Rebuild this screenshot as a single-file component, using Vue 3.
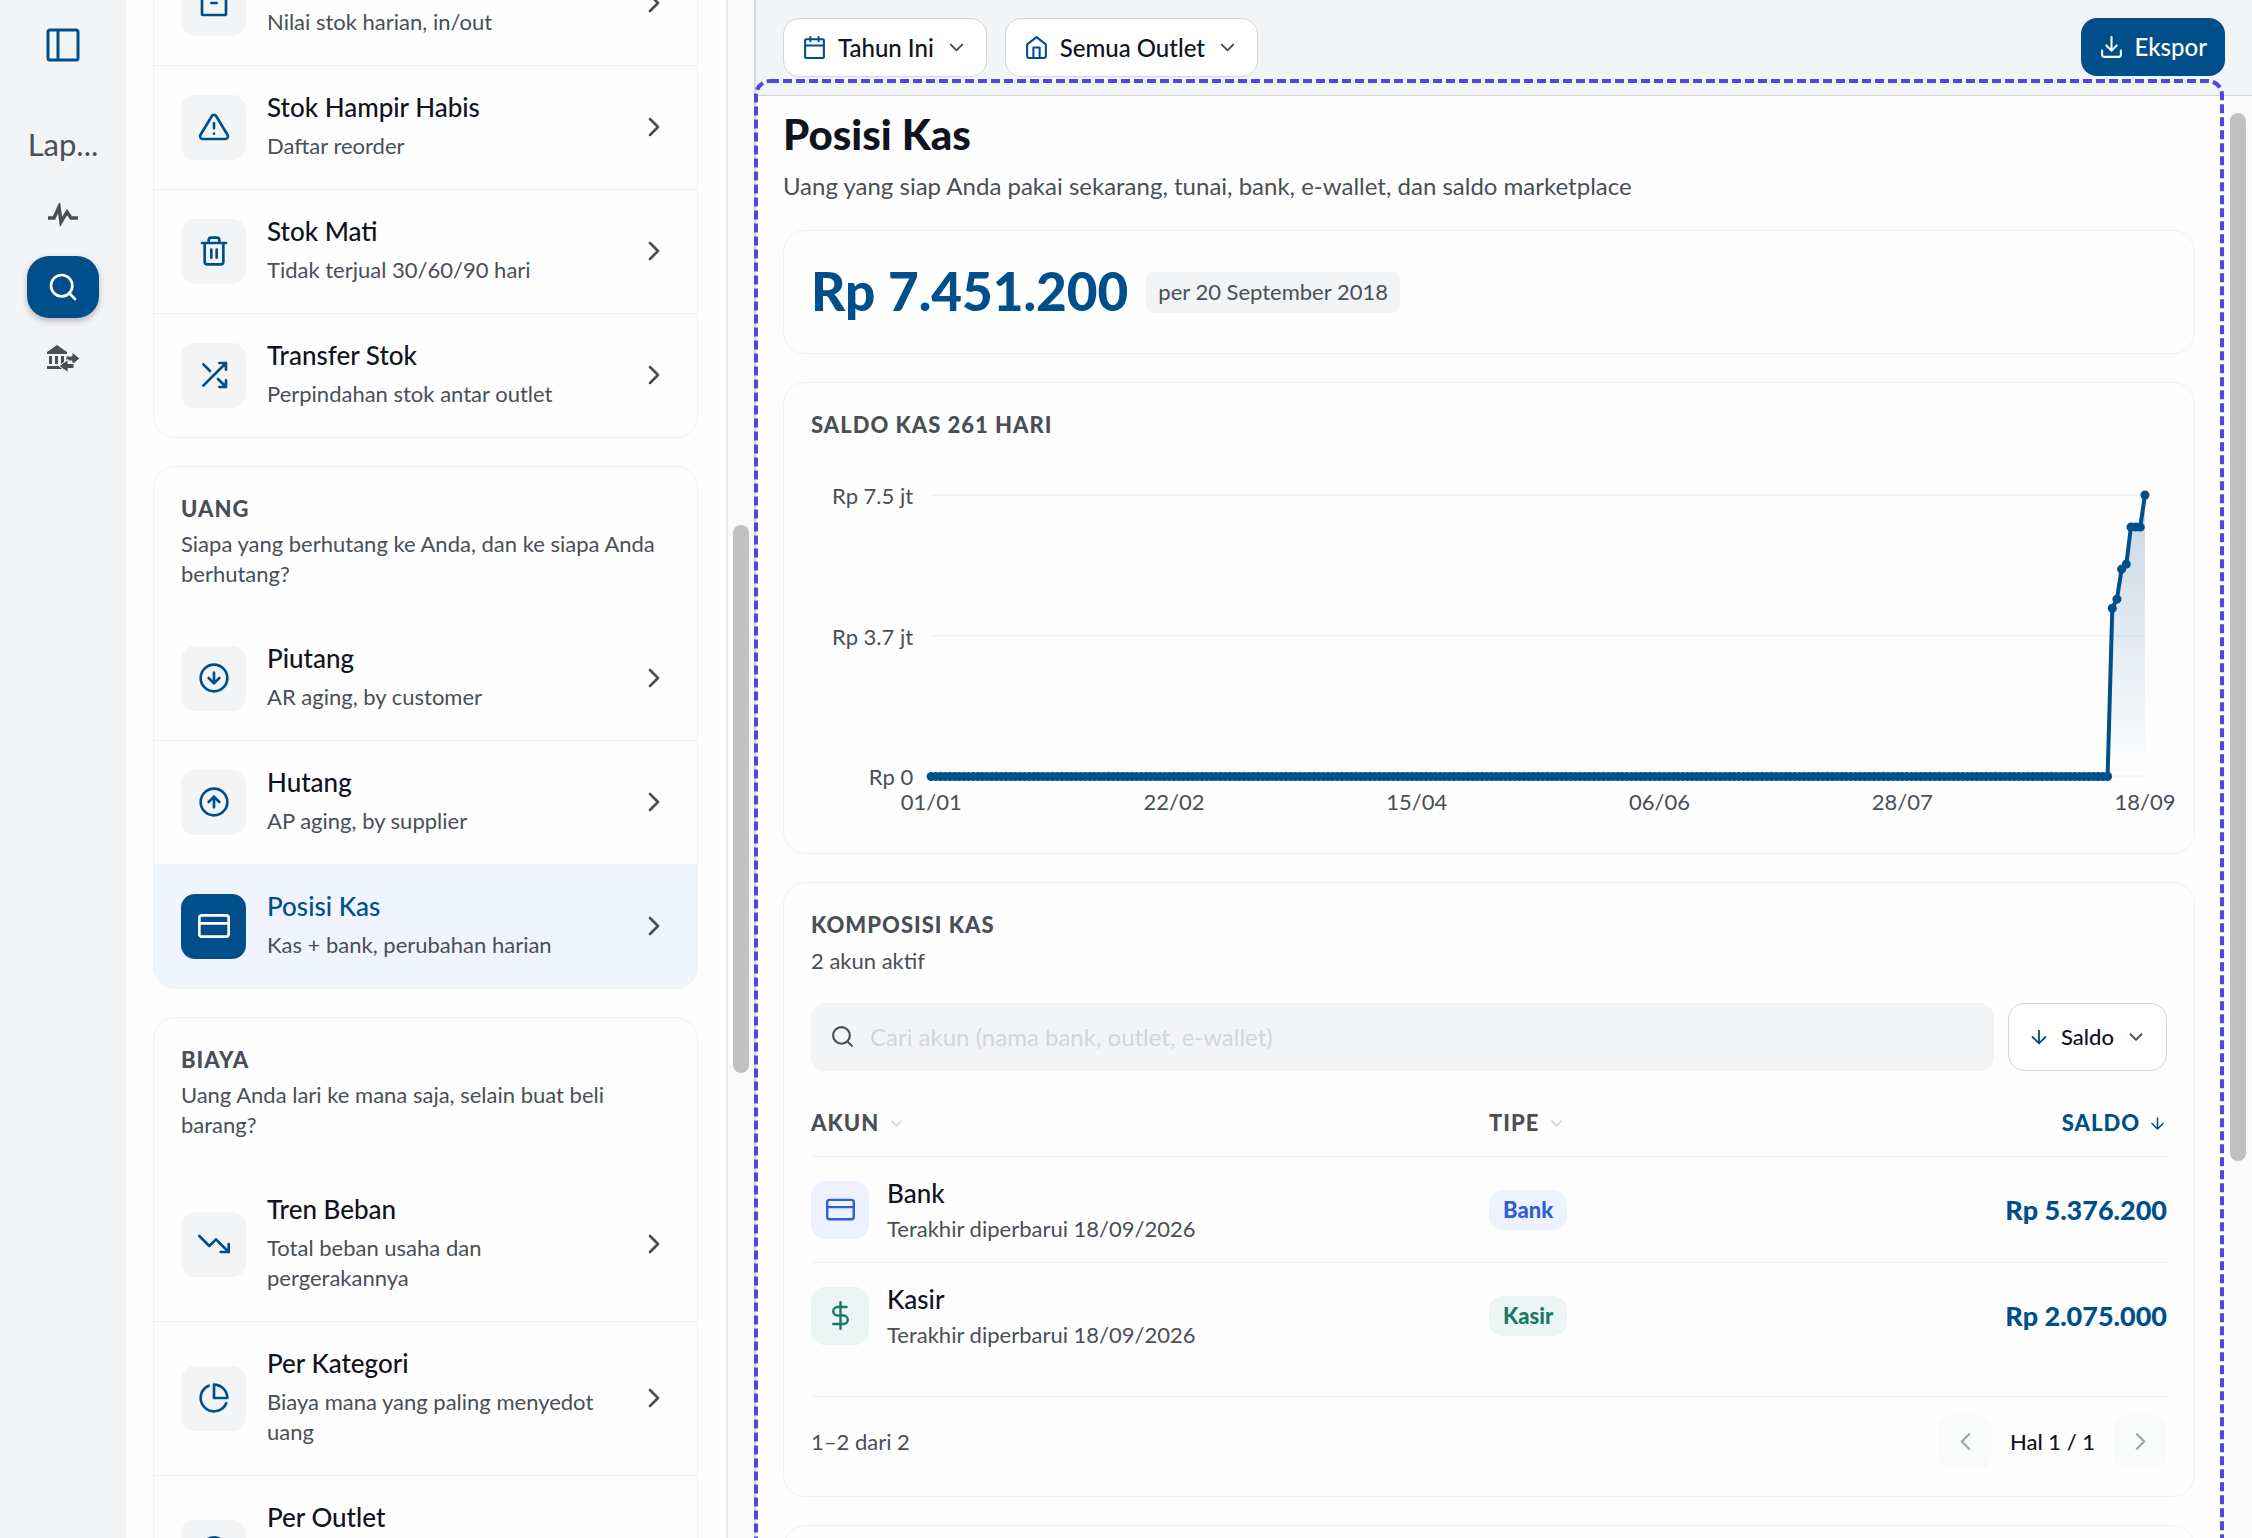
<script setup>
import { ref } from 'vue'

const search = ref('')

// feather-style outlines on a 24 x 24 grid
const icons = {
  box: '<rect x="3" y="3" width="18" height="18" rx="1"/><path d="M10 12h4"/>',
  alert: '<path d="M10.3 3.9 1.8 18a2 2 0 0 0 1.7 3h17a2 2 0 0 0 1.7-3L13.7 3.9a2 2 0 0 0-3.4 0z"/><path d="M12 9v4M12 17h.01"/>',
  trash: '<path d="M3 6h18M19 6v14a2 2 0 0 1-2 2H7a2 2 0 0 1-2-2V6M8 6V4a2 2 0 0 1 2-2h4a2 2 0 0 1 2 2v2M10 11v6M14 11v6"/>',
  shuffle: '<path d="M16 3h5v5M4 20 21 3M21 16v5h-5M15 15l6 6M4 4l5 5"/>',
  down: '<circle cx="12" cy="12" r="10"/><path d="m8 12 4 4 4-4M12 8v8"/>',
  up: '<circle cx="12" cy="12" r="10"/><path d="m16 12-4-4-4 4M12 16V8"/>',
  card: '<rect x="1" y="4" width="22" height="16" rx="2"/><path d="M1 10h22"/>',
  trend: '<path d="m23 18-9.5-9.5-5 5L1 6"/><path d="M17 18h6v-6"/>',
  pie: '<path d="M21.2 15.9A10 10 0 1 1 8 2.8"/><path d="M22 12A10 10 0 0 0 12 2v10z"/>',
  pin: '<path d="M21 10c0 7-9 13-9 13s-9-6-9-13a9 9 0 0 1 18 0z"/><circle cx="12" cy="10" r="3"/>',
  calendar: '<rect x="3" y="4" width="18" height="18" rx="1"/><path d="M16 2v4M8 2v4M3 10h18"/>',
  home: '<path d="m3 9 9-7 9 7v11a2 2 0 0 1-2 2H5a2 2 0 0 1-2-2z"/><path d="M9 22V12h6v10"/>',
  download: '<path d="M21 15v4a2 2 0 0 1-2 2H5a2 2 0 0 1-2-2v-4M7 10l5 5 5-5M12 15V2"/>',
  search: '<circle cx="11" cy="11" r="8"/><path d="m21 21-4.3-4.3"/>',
  arrow: '<path d="M12 5v14M19 12l-7 7-7-7"/>',
  chevronDown: '<path d="m6 9 6 6 6-6"/>',
  chevronRight: '<path d="m9 18 6-6-6-6"/>',
  chevronLeft: '<path d="m15 18-6-6 6-6"/>',
  dollar: '<path d="M12 1v22M17 5H9.5a3.5 3.5 0 0 0 0 7h5a3.5 3.5 0 0 1 0 7H6"/>'
}

const groups = [
  {
    id: 'stok',
    items: [
      { name: 'Nilai Stok', desc: 'Nilai stok harian, in/out', icon: 'box' },
      { name: 'Stok Hampir Habis', desc: 'Daftar reorder', icon: 'alert' },
      { name: 'Stok Mati', desc: 'Tidak terjual 30/60/90 hari', icon: 'trash' },
      { name: 'Transfer Stok', desc: 'Perpindahan stok antar outlet', icon: 'shuffle' }
    ]
  },
  {
    id: 'uang',
    title: 'UANG',
    desc: 'Siapa yang berhutang ke Anda, dan ke siapa Anda berhutang?',
    items: [
      { name: 'Piutang', desc: 'AR aging, by customer', icon: 'down' },
      { name: 'Hutang', desc: 'AP aging, by supplier', icon: 'up' },
      { name: 'Posisi Kas', desc: 'Kas + bank, perubahan harian', icon: 'card', active: true }
    ]
  },
  {
    id: 'biaya',
    title: 'BIAYA',
    desc: 'Uang Anda lari ke mana saja, selain buat beli barang?',
    items: [
      { name: 'Tren Beban', desc: 'Total beban usaha dan pergerakannya', icon: 'trend' },
      { name: 'Per Kategori', desc: 'Biaya mana yang paling menyedot uang', icon: 'pie' },
      { name: 'Per Outlet', desc: 'Outlet mana yang paling banyak keluar biaya', icon: 'pin' }
    ]
  }
]

const accounts = [
  { name: 'Bank', updated: '18/09/2026', type: 'Bank', kind: 'blue', icon: 'card', balance: 'Rp 5.376.200' },
  { name: 'Kasir', updated: '18/09/2026', type: 'Kasir', kind: 'green', icon: 'dollar', balance: 'Rp 2.075.000' }
]

// chart geometry
const left = 120
const right = 1332
const top = 26
const bottom = 307
const max = 7451200
const balances = [
  ...Array(253).fill(0),
  4455000, 4694000, 5489000, 5622000, 6603000, 6603000, 6603000, 7451200
]
const points = balances.map((v, i) => ({
  x: left + (i * (right - left)) / (balances.length - 1),
  y: bottom - (v / max) * (bottom - top)
}))
const line = points.map((p) => `${p.x.toFixed(1)},${p.y.toFixed(1)}`).join(' ')
const area = `${left},${bottom} ${line} ${right},${bottom}`
const yTicks = [
  { label: 'Rp 7.5 jt', y: top },
  { label: 'Rp 3.7 jt', y: (top + bottom) / 2 },
  { label: 'Rp 0', y: bottom }
]
const xTicks = ['01/01', '22/02', '15/04', '06/06', '28/07', '18/09'].map((label, i) => ({
  label,
  x: left + (i * (right - left)) / 5
}))
</script>

<template>
  <div class="app">
    <nav class="rail" aria-label="Menu utama">
      <button class="rail-toggle" aria-label="Buka menu">
        <svg viewBox="0 0 34 34"><rect x="2" y="2" width="30" height="30" rx="2" /><path d="M12 2v30" /></svg>
      </button>
      <span class="rail-title">Lap...</span>
      <a href="#" class="rail-link" aria-label="Aktivitas">
        <svg viewBox="0 0 32 24" class="pulse"><path d="M1 15h6L12 4l2 15 6-10 4 6h7" /></svg>
      </a>
      <a href="#" class="rail-link on" aria-label="Cari">
        <svg class="icon" viewBox="0 0 24 24" v-html="icons.search"></svg>
      </a>
      <a href="#" class="rail-link" aria-label="Mutasi bank">
        <svg viewBox="0 0 34 28" class="bank">
          <path d="M1 7 11 0l10 7v2H1zM3 11h3v8H3zM9 11h3v8H9zM15 11h3v8h-3zM1 21h15v3H1z" />
          <path class="cut" d="M20 11h6V7l8 6.500-8 6.500v-4h-6z" />
          <path class="cut" d="M28 18.500v5h-6v4L13 21l9-6.500v4z" />
        </svg>
      </a>
    </nav>

    <aside class="list">
      <div class="list-inner">
        <section v-for="g in groups" :key="g.id" class="card group">
          <header v-if="g.title" class="group-head">
            <h2 class="caps">{{ g.title }}</h2>
            <p>{{ g.desc }}</p>
          </header>
          <a v-for="item in g.items" :key="item.name" href="#" class="item" :class="{ active: item.active }">
            <span class="tile"><svg class="icon" viewBox="0 0 24 24" v-html="icons[item.icon]"></svg></span>
            <span class="item-text">
              <span class="item-name">{{ item.name }}</span>
              <span class="item-desc">{{ item.desc }}</span>
            </span>
            <svg class="icon go" viewBox="0 0 24 24" v-html="icons.chevronRight"></svg>
          </a>
        </section>
      </div>
    </aside>
    <div class="scroll list-scroll"><span class="thumb"></span></div>

    <main class="main">
      <div class="toolbar">
        <button class="filter">
          <svg class="icon" viewBox="0 0 24 24" v-html="icons.calendar"></svg>
          Tahun Ini
          <svg class="icon caret" viewBox="0 0 24 24" v-html="icons.chevronDown"></svg>
        </button>
        <button class="filter">
          <svg class="icon" viewBox="0 0 24 24" v-html="icons.home"></svg>
          Semua Outlet
          <svg class="icon caret" viewBox="0 0 24 24" v-html="icons.chevronDown"></svg>
        </button>
        <button class="export">
          <svg class="icon" viewBox="0 0 24 24" v-html="icons.download"></svg>
          Ekspor
        </button>
      </div>

      <div class="body">
        <div class="content">
          <h1>Posisi Kas</h1>
          <p class="lead">Uang yang siap Anda pakai sekarang, tunai, bank, e-wallet, dan saldo marketplace</p>

          <section class="card total">
            <strong>Rp 7.451.200</strong>
            <span class="date">per 20 September 2018</span>
          </section>

          <section class="card panel">
            <h2 class="caps">SALDO KAS 261 HARI</h2>
            <svg class="chart" viewBox="0 0 1354 356" role="img" aria-label="Grafik saldo kas">
              <defs>
                <linearGradient id="fade" x1="0" y1="0" x2="0" y2="1">
                  <stop offset="0" stop-color="#004f8b" stop-opacity="0.22" />
                  <stop offset="1" stop-color="#004f8b" stop-opacity="0" />
                </linearGradient>
              </defs>
              <g v-for="t in yTicks" :key="t.label">
                <line :x1="left" :x2="right" :y1="t.y" :y2="t.y" class="grid" />
                <text :x="102" :y="t.y + 9" text-anchor="end">{{ t.label }}</text>
              </g>
              <polygon :points="area" fill="url(#fade)" />
              <polyline :points="line" class="line" />
              <circle v-for="(p, i) in points" :key="i" :cx="p.x" :cy="p.y" r="4.5" class="dot" />
              <text v-for="t in xTicks" :key="t.label" :x="t.x" y="341" text-anchor="middle">{{ t.label }}</text>
            </svg>
          </section>

          <section class="card panel">
            <h2 class="caps">KOMPOSISI KAS</h2>
            <p class="note">2 akun aktif</p>

            <div class="tools">
              <label class="search">
                <svg class="icon" viewBox="0 0 24 24" v-html="icons.search"></svg>
                <input v-model="search" type="text" aria-label="Cari akun" placeholder="Cari akun (nama bank, outlet, e-wallet)" />
              </label>
              <button class="sort">
                <svg class="icon" viewBox="0 0 24 24" v-html="icons.arrow"></svg>
                Saldo
                <svg class="icon caret" viewBox="0 0 24 24" v-html="icons.chevronDown"></svg>
              </button>
            </div>

            <table>
              <thead>
                <tr>
                  <th class="col-name"><span>AKUN <svg class="icon" viewBox="0 0 24 24" v-html="icons.chevronDown"></svg></span></th>
                  <th><span>TIPE <svg class="icon" viewBox="0 0 24 24" v-html="icons.chevronDown"></svg></span></th>
                  <th class="num"><span>SALDO <svg class="icon" viewBox="0 0 24 24" v-html="icons.arrow"></svg></span></th>
                </tr>
              </thead>
              <tbody>
                <tr v-for="a in accounts" :key="a.name">
                  <td>
                    <div class="account">
                      <span class="mini" :class="a.kind"><svg class="icon" viewBox="0 0 24 24" v-html="icons[a.icon]"></svg></span>
                      <div class="account-text">
                        <span class="item-name">{{ a.name }}</span>
                        <span class="item-desc">Terakhir diperbarui {{ a.updated }}</span>
                      </div>
                    </div>
                  </td>
                  <td><span class="badge" :class="a.kind">{{ a.type }}</span></td>
                  <td class="num">{{ a.balance }}</td>
                </tr>
              </tbody>
            </table>

            <footer class="pager">
              <span class="note">1–2 dari 2</span>
              <button disabled aria-label="Sebelumnya"><svg class="icon" viewBox="0 0 24 24" v-html="icons.chevronLeft"></svg></button>
              <span class="page">Hal 1 / 1</span>
              <button disabled aria-label="Berikutnya"><svg class="icon" viewBox="0 0 24 24" v-html="icons.chevronRight"></svg></button>
            </footer>
          </section>

          <section class="card next"></section>
        </div>
        <div class="scroll main-scroll"><span class="thumb"></span></div>
      </div>

      <svg class="focus" aria-hidden="true"><rect x="2" y="2" rx="14" /></svg>
    </main>
  </div>
</template>

<style>
body { margin: 0; overflow: hidden; }
</style>

<style scoped>
* { box-sizing: border-box; }
.app {
  display: flex;
  height: 100vh;
  overflow: hidden;
  background: #fefefe;
  color: #11131f;
  font-family: Lato, "Open Sans", sans-serif;
  font-size: 22px;
  line-height: 30px;
}
h1, h2, p { margin: 0; }
a { color: inherit; text-decoration: none; }
button { font: inherit; color: inherit; border: 0; padding: 0; }
.icon { width: 32px; height: 32px; flex: none; fill: none; stroke: currentColor; stroke-width: 2; stroke-linecap: round; stroke-linejoin: round; }

/* left rail */
.rail { width: 126px; flex: none; background: #f3f4f6; display: flex; flex-direction: column; align-items: center; color: #4a4f56; }
.rail-toggle { margin-top: 28px; width: 34px; height: 34px; background: none; color: #004f8b; }
.rail-toggle svg { display: block; fill: none; stroke: currentColor; stroke-width: 3; }
.rail-title { margin-top: 62px; margin-bottom: 20px; font-size: 31px; line-height: 40px; }
.rail-link { width: 72px; height: 62px; margin-bottom: 10px; display: flex; align-items: center; justify-content: center; border-radius: 22px; }
.rail-link.on { background: #004f8b; color: #fff; box-shadow: 0 3px 6px rgba(0, 0, 0, 0.25); }
.pulse { width: 32px; height: 24px; fill: none; stroke: currentColor; stroke-width: 3.5; }
.bank { width: 34px; height: 28px; fill: currentColor; overflow: visible; }
.cut { stroke: #f3f4f6; stroke-width: 1; }

/* report list */
.list { width: 600px; flex: none; overflow: hidden; display: flex; flex-direction: column; }
.list-inner { padding: 0 28px 0 27px; margin-top: -60px; display: flex; flex-direction: column; gap: 28px; }
.card { border: 1px solid #f1f2f4; border-radius: 22px; background: #fefefe; }
.group { overflow: hidden; flex: none; }
.group-head { padding: 27px 27px 27px; color: #4a4f56; }
.caps { font-size: 22px; line-height: 30px; font-weight: 900; letter-spacing: 1px; color: #4a4f56; }
.group-head p { margin-top: 5px; }
.item { display: flex; align-items: center; gap: 21px; padding: 24px 27px 25px; border-top: 1px solid #f1f2f4; }
.item:first-child, .group-head + .item { border-top-color: transparent; }
.tile { width: 65px; height: 65px; flex: none; border-radius: 14px; background: #f3f4f6; color: #004f8b; display: flex; align-items: center; justify-content: center; }
.item-text { flex: 1; display: flex; flex-direction: column; gap: 6px; padding-bottom: 3px; }
.item-name { font-size: 26px; line-height: 35px; font-weight: 500; }
.item-desc { color: #4a4f56; }
.go { color: #4a4f56; }
.active { background: #eff4ff; }
.active .item-name { color: #004f8b; }
.active .tile { background: #004f8b; color: #fff; }

/* drawn scrollbars */
.scroll { width: 28px; flex: none; background: #fafafa; display: flex; flex-direction: column; align-items: center; }
.thumb { width: 16px; border-radius: 8px; background: #c1c1c1; }
.list-scroll { border-left: 2px solid #ebebec; padding-top: 525px; }
.list-scroll .thumb { height: 548px; }
.main-scroll { padding-top: 17px; }
.main-scroll .thumb { height: 1048px; }

/* report */
.main { position: relative; flex: 1; min-width: 0; display: flex; flex-direction: column; border-left: 2px solid #d5d8dc; }
.toolbar { height: 96px; flex: none; display: flex; align-items: flex-start; gap: 18px; padding: 18px 27px; background: #f3f4f6; border-bottom: 1px solid #cfd3d8; }
.filter, .sort, .export { display: flex; align-items: center; font-size: 24px; font-weight: 500; border-radius: 16px; }
.filter, .sort { background: #fff; border: 1px solid #d1d5db; }
.filter { height: 59px; padding: 0 18px; gap: 11px; }
.filter .icon, .export .icon { width: 25px; height: 25px; color: #004f8b; }
.filter .caret { width: 23px; height: 23px; color: #4a4f56; }
.export { margin-left: auto; height: 58px; padding: 0 18px; gap: 11px; background: #004f8b; color: #fff; }
.export .icon { color: #fff; }
.body { flex: 1; min-height: 0; display: flex; }
.content { flex: 1; min-width: 0; overflow: hidden; padding: 12px 29px 0 27px; display: flex; flex-direction: column; }
.content > .card { flex: none; margin-bottom: 28px; }
h1 { font-size: 42px; line-height: 52px; font-weight: 900; }
.lead { margin: 10px 0 28px; font-size: 24px; line-height: 32px; color: #4a4f56; }
.total { display: flex; align-items: center; gap: 18px; height: 124px; padding: 0 27px; }
.total strong { padding-bottom: 2px; font-size: 53px; line-height: 64px; font-weight: 900; color: #004f8b; }
.date { padding: 5px 12px 6px; border-radius: 8px; background: #f3f4f6; color: #4a4f56; }
.panel { padding: 27px; }
.chart { display: block; width: 100%; margin-top: 29px; font-size: 22px; fill: #4a4f56; overflow: visible; }
.grid { stroke: #f1f2f4; stroke-width: 2; }
.line { fill: none; stroke: #004f8b; stroke-width: 4; stroke-linejoin: round; }
.dot { fill: #004f8b; }
.note { color: #4a4f56; }
.panel > .note { margin-top: 6px; }
.tools { display: flex; gap: 14px; margin-top: 27px; }
.search { flex: 1; height: 68px; display: flex; align-items: center; gap: 15px; padding: 0 19px; border-radius: 14px; background: #f3f4f6; color: #4a4f56; }
.search .icon { width: 25px; height: 25px; }
.search input { flex: 1; border: 0; outline: 0; padding: 0; background: none; font: inherit; font-size: 24px; color: inherit; }
.search input::placeholder { color: #d1d5db; opacity: 1; }
.sort { height: 68px; padding: 0 19px; gap: 11px; font-size: 22px; }
.sort .icon { width: 22px; height: 22px; color: #004f8b; }
.sort .caret { color: #4a4f56; }
table { width: 100%; margin-top: 20px; border-collapse: collapse; table-layout: fixed; }
th { height: 66px; padding: 0; text-align: left; font-size: 22px; font-weight: 900; letter-spacing: 1px; color: #4a4f56; border-bottom: 1px solid #f1f2f4; }
th span { display: inline-flex; align-items: center; gap: 8px; }
th .icon { width: 19px; height: 19px; color: #d1d5db; }
.col-name { width: 50%; }
th.num, th.num .icon { color: #004f8b; }
td { height: 106px; padding: 0; }
tbody tr + tr td { border-top: 1px solid #f1f2f4; }
.num { text-align: right; }
td.num { font-size: 27px; font-weight: 900; color: #004f8b; }
.account { display: flex; align-items: center; gap: 18px; }
.account-text { display: flex; flex-direction: column; gap: 3px; }
.mini { width: 58px; height: 58px; border-radius: 14px; display: flex; align-items: center; justify-content: center; }
.mini .icon { width: 29px; height: 29px; }
.badge { display: inline-block; padding: 5px 14px; border-radius: 14px; font-weight: 900; }
.blue { background: #edf2fe; color: #2f5fd3; }
.green { background: #ebf5f3; color: #1b7a65; }
.pager { display: flex; align-items: center; gap: 18px; margin-top: 27px; padding-top: 18px; border-top: 1px solid #f1f2f4; }
.pager .note { margin-right: auto; }
.pager button { width: 54px; height: 54px; border-radius: 14px; background: #f9fafa; color: #a2a5a9; display: flex; align-items: center; justify-content: center; }
.pager .icon { width: 29px; height: 29px; }
.page { font-weight: 500; }
.next { height: 200px; }

/* dashed frame around the active pane */
.focus { position: absolute; left: -2px; top: 79px; width: calc(100% - 26px); height: 100%; pointer-events: none; }
.focus rect { width: calc(100% - 4px); height: 100%; fill: none; stroke: #5046e0; stroke-width: 4; stroke-dasharray: 9 4; }
</style>
